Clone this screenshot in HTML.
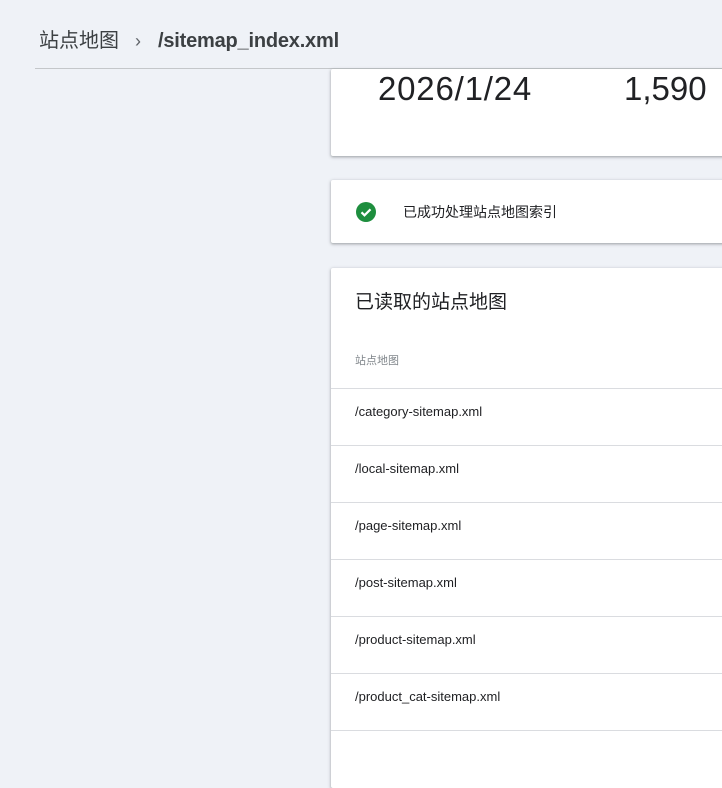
<!DOCTYPE html>
<html><head><meta charset="utf-8"><style>
body{margin:0;width:722px;height:774px;overflow:hidden;background:#eff2f7;font-family:"Liberation Sans","Noto Sans CJK SC",sans-serif;position:relative}
.hdr{position:absolute;left:39px;top:24px;font-size:20px;color:#3c4043;white-space:nowrap}
.hdr .c{color:#5f6368;margin:0 17px 0 16px;font-size:18px}
.hdr b{font-weight:bold;color:#3c4043;font-size:20px;letter-spacing:-0.2px}
.line{position:absolute;left:35px;right:0;top:68px;height:1px;background:#c4c7ca}
.card{position:absolute;left:331px;width:420px;background:#fff;box-shadow:0 1px 2px rgba(60,64,67,.3),0 1px 3px 1px rgba(60,64,67,.15);border-radius:2px}
.big{position:absolute;top:70px;font-size:33px;color:#202124}
.row{position:absolute;left:0;right:0;height:56px;border-top:1px solid #dadce0;font-size:13px;color:#202124;padding-left:24px;line-height:44px}
</style></head><body>
<div class="hdr">站点地图<span class="c">›</span><b>/sitemap_index.xml</b></div>
<div class="line"></div>
<div class="card" style="top:69px;height:87px"></div>
<div class="big" style="left:378px;letter-spacing:0.8px">2026/1/24</div>
<div class="big" style="left:624px">1,590</div>
<div class="card" style="top:180px;height:63px">
<svg style="position:absolute;left:25px;top:22px" width="20" height="20" viewBox="0 0 20 20"><circle cx="10" cy="10" r="10" fill="#1e8e3e"/><path d="M5.5 10.3l3 3 6-6" stroke="#fff" stroke-width="2.2" fill="none"/></svg>
<div style="position:absolute;left:72px;top:22px;font-size:14px;color:#202124">已成功处理站点地图索引</div>
</div>
<div class="card" style="top:268px;height:520px">
<div style="position:absolute;left:24px;top:19px;font-size:19px;color:#202124">已读取的站点地图</div>
<div style="position:absolute;left:24px;top:84px;font-size:11px;color:#80868b">站点地图</div>
<div class="row" style="top:120px;line-height:46px">/category-sitemap.xml</div>
<div class="row" style="top:177px;line-height:46px">/local-sitemap.xml</div>
<div class="row" style="top:234px;line-height:46px">/page-sitemap.xml</div>
<div class="row" style="top:291px;line-height:46px">/post-sitemap.xml</div>
<div class="row" style="top:348px;line-height:46px">/product-sitemap.xml</div>
<div class="row" style="top:405px;line-height:46px">/product_cat-sitemap.xml</div>
<div class="row" style="top:462px"></div>
</div>
</body></html>
